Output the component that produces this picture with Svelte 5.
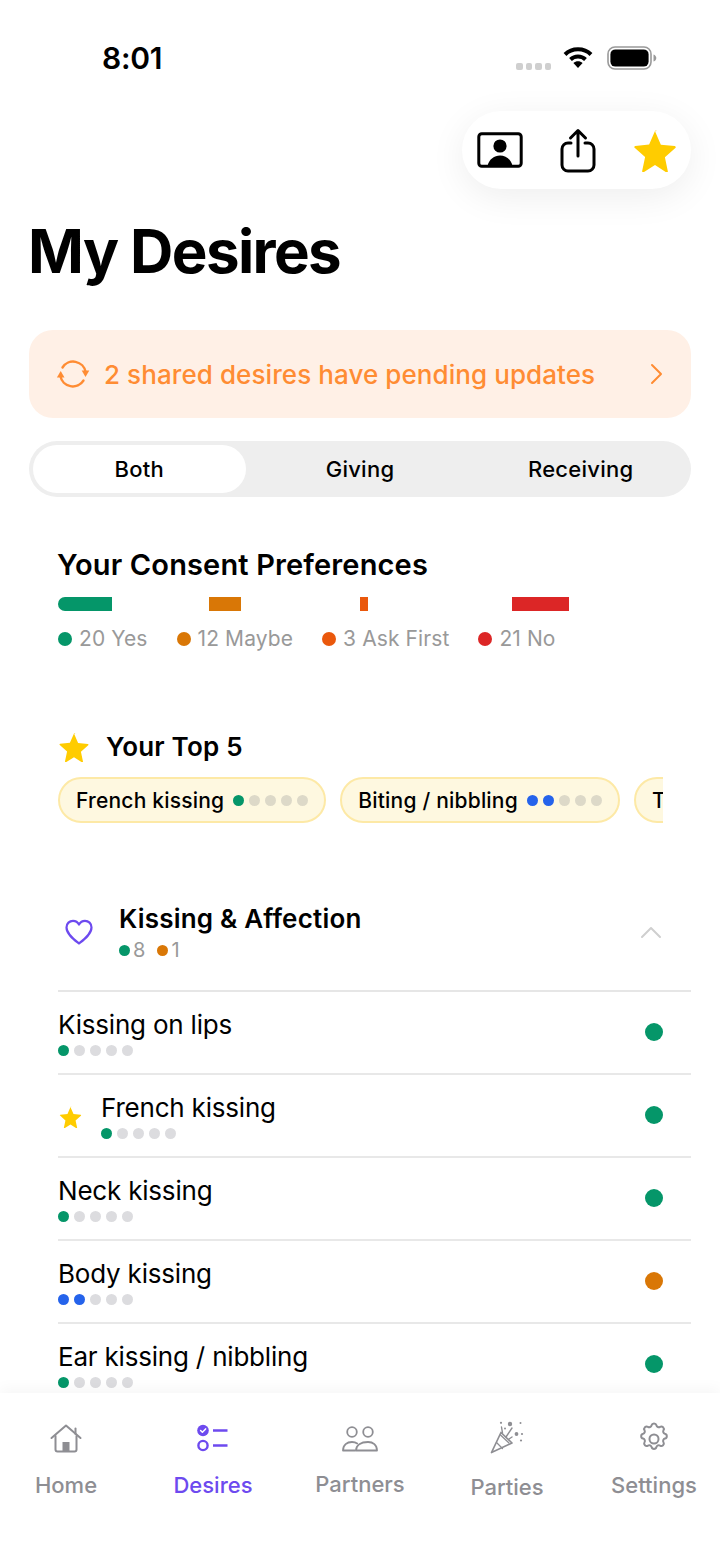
<script lang="ts">
  const consent = [
    { label: '20 Yes', color: '#059669', width: 54 },
    { label: '12 Maybe', color: '#d97706', width: 32 },
    { label: '3 Ask First', color: '#ea580c', width: 8 },
    { label: '21 No', color: '#dc2626', width: 57 }
  ];

  const GREEN = '#059669';
  const BLUE = '#2563eb';

  const top5 = [
    { name: 'French kissing', color: GREEN, level: 1 },
    { name: 'Biting / nibbling', color: BLUE, level: 2 },
    { name: 'Teasing', color: GREEN, level: 1 }
  ];

  const rows = [
    { name: 'Kissing on lips', level: 1, color: GREEN, status: GREEN },
    { name: 'French kissing', level: 1, color: GREEN, status: GREEN, starred: true },
    { name: 'Neck kissing', level: 1, color: GREEN, status: GREEN },
    { name: 'Body kissing', level: 2, color: BLUE, status: '#d97706' },
    { name: 'Ear kissing / nibbling', level: 1, color: GREEN, status: GREEN }
  ];

  const starPath = 'M12 1.2l3.2 7.3 7.6.8c.5.1.7.7.3 1l-5.7 5.1 1.6 7.6c.1.5-.4.9-.9.6L12 19.6l-6.100 3.9c-.5.3-1-.1-.9-.6l1.600-7.600-5.700-5.100c-.4-.3-.2-.9.3-1l7.600-.8 3.200-7.300c.2-.4.800-.4 1 0z';
</script>

<div class="screen">
  <main class="content">
    <header class="status">
      <span class="time">8:01</span>
      <div class="status-right">
        <div class="signal"><i></i><i></i><i></i><i></i></div>
        <svg class="wifi" width="30" height="22" viewBox="0 0 30 22" fill="none" stroke="#000" stroke-width="4">
          <path d="M2 8.500C9 1.500 21 1.500 28 8.500" />
          <path d="M7.500 13.500c4.200-4 10.800-4 15 0" />
          <path d="M15 22l-4.600-5c2.600-2.200 6.600-2.200 9.200 0z" fill="#000" stroke="none" />
        </svg>
        <svg class="battery" width="50" height="24" viewBox="0 0 50 24" fill="none">
          <rect x="1" y="1" width="43" height="22" rx="7" stroke="#999" stroke-width="1.600" />
          <rect x="3.400" y="3.400" width="38.200" height="17.200" rx="5" fill="#000" />
          <path d="M46.500 8.500c1.800.5 2.800 2 2.800 3.500s-1 3-2.800 3.500z" fill="#999" />
        </svg>
      </div>
    </header>

    <div class="toolbar-row">
      <div class="toolbar">
        <svg width="46" height="36" viewBox="0 0 46 36" fill="none">
          <rect x="1.800" y="1.800" width="42.400" height="32.400" rx="3" stroke="#000" stroke-width="3" />
          <circle cx="23" cy="14" r="6.600" fill="#000" />
          <path d="M10.500 34c1.500-7 7-10.500 12.500-10.500S34 27 35.500 34z" fill="#000" />
        </svg>
        <svg width="36" height="45" viewBox="0 0 36 45" fill="none" stroke="#000" stroke-width="3" stroke-linecap="round" stroke-linejoin="round">
          <path d="M11 15H8a6 6 0 0 0-6 6v16a6 6 0 0 0 6 6h20a6 6 0 0 0 6-6V21a6 6 0 0 0-6-6h-3" />
          <path d="M18 28V3M10.500 10L18 2.500 25.500 10" />
        </svg>
        <svg width="44" height="43" viewBox="0 0 24 23.400" fill="#ffcc00"><path d={starPath} /></svg>
      </div>
    </div>

    <h1>My Desires</h1>

    <div class="banner">
      <svg width="34" height="30" viewBox="0 0 34 30" fill="none" stroke="#ff8c33" stroke-width="2.400" stroke-linecap="round">
        <path d="M6.500 8.500A12.600 12.600 0 0 1 29.600 13" />
        <path d="M27.500 21.500A12.600 12.600 0 0 1 4.400 17" />
        <path d="M25.700 11.500h7.600L29.500 18z" fill="#ff8c33" stroke="none" />
        <path d="M.9 18.500h7.600L4.700 12z" fill="#ff8c33" stroke="none" />
      </svg>
      <span class="banner-text">2 shared desires have pending updates</span>
      <svg class="banner-chevron" width="14" height="22" viewBox="0 0 14 22" fill="none" stroke="#ff8c33" stroke-width="2" stroke-linecap="round" stroke-linejoin="round">
        <path d="M3 2l9 9-9 9" />
      </svg>
    </div>

    <div class="segments">
      <div class="segment active">Both</div>
      <div class="segment">Giving</div>
      <div class="segment">Receiving</div>
    </div>

    <section class="consent">
      <h2>Your Consent Preferences</h2>
      <div class="bars">
        {#each consent as item, i}
          <div class="bar-cell">
            <div class="bar" class:first={i === 0} style="width:{item.width}px;background:{item.color}"></div>
          </div>
        {/each}
      </div>
      <div class="legend">
        {#each consent as item}
          <span class="legend-item"><i style="background:{item.color}"></i>{item.label}</span>
        {/each}
      </div>
    </section>

    <section class="top5">
      <div class="top5-head">
        <svg width="32" height="30" viewBox="0 0 24 23.400" fill="#ffcc00"><path d={starPath} /></svg>
        <h3>Your Top 5</h3>
      </div>
      <div class="chips">
        {#each top5 as chip}
          <div class="chip">
            <span>{chip.name}</span>
            <div class="dots chip-dots">
              {#each [1, 2, 3, 4, 5] as n}
                <i style={n <= chip.level ? `background:${chip.color}` : ''}></i>
              {/each}
            </div>
          </div>
        {/each}
      </div>
    </section>

    <section class="category">
      <div class="cat-head">
        <svg class="heart" width="28" height="26" viewBox="0 0 28 26" fill="none" stroke="#6d4aef" stroke-width="2.200" stroke-linejoin="round">
          <path d="M14 24.500C9 20.500 1.500 15 1.500 8.500 1.500 4.500 4.500 1.800 8 1.800c2.600 0 4.800 1.400 6 3.700 1.200-2.300 3.400-3.700 6-3.700 3.500 0 6.500 2.700 6.500 6.700 0 6.500-7.500 12-12.500 16z" />
        </svg>
        <div class="cat-title">
          <h3>Kissing &amp; Affection</h3>
          <div class="cat-counts">
            <span><i style="background:#059669"></i>8</span>
            <span><i style="background:#d97706"></i>1</span>
          </div>
        </div>
        <svg class="cat-chevron" width="22" height="14" viewBox="0 0 22 14" fill="none" stroke="#cfcfcf" stroke-width="2" stroke-linecap="round" stroke-linejoin="round">
          <path d="M2 12l9-9 9 9" />
        </svg>
      </div>

      {#each rows as row}
        <div class="row">
          {#if row.starred}
            <svg class="row-star" width="23" height="22" viewBox="0 0 24 23.400" fill="#ffcc00"><path d={starPath} /></svg>
          {/if}
          <div class="row-main">
            <div class="row-name">{row.name}</div>
            <div class="dots">
              {#each [1, 2, 3, 4, 5] as n}
                <i style={n <= row.level ? `background:${row.color}` : ''}></i>
              {/each}
            </div>
          </div>
          <div class="status-dot" style="background:{row.status}"></div>
        </div>
      {/each}
    </section>
  </main>

  <nav class="tabs">
    <div class="tab">
      <svg width="32" height="29" viewBox="0 0 32 29" fill="none" stroke="#8e8e93" stroke-width="2" stroke-linecap="round" stroke-linejoin="round">
        <path d="M1.500 14L16 1.500 30.500 14" />
        <path d="M25.500 4.500V10" />
        <path d="M5.500 12v13.500a2 2 0 0 0 2 2h17a2 2 0 0 0 2-2V12" />
        <rect x="12.500" y="18" width="7" height="9.500" fill="#8e8e93" stroke="none" />
      </svg>
      <span>Home</span>
    </div>
    <div class="tab active">
      <svg width="32" height="28" viewBox="0 0 32 28" fill="none" stroke="#6d4aef" stroke-width="2.400" stroke-linecap="round">
        <circle cx="6" cy="6.500" r="5.800" fill="#6d4aef" stroke="none" />
        <path d="M3.600 6.500l1.800 1.800 3.200-3.400" stroke="#fff" stroke-width="1.500" stroke-linejoin="round" />
        <circle cx="6" cy="21.500" r="4.600" />
        <path d="M16 6.500h14.500M16 21.500h14.500" stroke-linecap="butt" />
      </svg>
      <span>Desires</span>
    </div>
    <div class="tab partners">
      <svg width="36" height="26" viewBox="0 0 36 26" fill="none" stroke="#8e8e93" stroke-width="1.800" stroke-linecap="round" stroke-linejoin="round">
        <circle cx="10" cy="6" r="4.800" />
        <path d="M1 24.500c0-5.500 4-8.500 9-8.500 2 0 3.800.5 5.200 1.500M1 24.500h12" />
        <circle cx="26" cy="6" r="4.800" />
        <path d="M14 24.500c0-5.500 5-8.500 12-8.500 5 0 9 3 9 8.500z" />
      </svg>
      <span>Partners</span>
    </div>
    <div class="tab parties">
      <svg width="34" height="34" viewBox="0 0 34 34" fill="none" stroke="#8e8e93" stroke-width="1.700" stroke-linecap="round" stroke-linejoin="round">
        <path d="M1.500 31.500L11 11.500l11 10.500z" />
        <path d="M6.500 21.500l6 6M10.500 14l8.500 8" stroke-width="1.300" />
        <path d="M12.500 12l-1-6M16 16l6-9M19 18l3-2" stroke-width="1.400" />
        <circle cx="20" cy="3" r="2.200" fill="#8e8e93" stroke="none" />
        <circle cx="26.500" cy="13" r="1.900" fill="#8e8e93" stroke="none" />
        <circle cx="32" cy="13" r="1.100" fill="#8e8e93" stroke="none" />
        <circle cx="31" cy="19.500" r="1.100" fill="#8e8e93" stroke="none" />
        <circle cx="11" cy="1.800" r="1.100" fill="#8e8e93" stroke="none" />
        <circle cx="30.500" cy="2" r="1" fill="#8e8e93" stroke="none" />
        <circle cx="15" cy="7.500" r="1" fill="#8e8e93" stroke="none" />
      </svg>
      <span>Parties</span>
    </div>
    <div class="tab settings">
      <svg width="34" height="34" viewBox="0 0 24 24" fill="none" stroke="#8e8e93" stroke-width="1.400" stroke-linecap="round" stroke-linejoin="round">
        <circle cx="12" cy="12" r="3.200" />
        <path d="M10.300 2.300c.4-1.700 3-1.700 3.400 0a1.700 1.700 0 0 0 2.600 1.100c1.500-.9 3.300.9 2.400 2.400a1.700 1.700 0 0 0 1 2.500c1.800.4 1.800 3 0 3.400a1.700 1.700 0 0 0-1 2.600c.9 1.500-.9 3.300-2.400 2.400a1.700 1.700 0 0 0-2.600 1c-.4 1.800-3 1.800-3.400 0a1.700 1.700 0 0 0-2.600-1c-1.500.9-3.300-.9-2.400-2.400a1.700 1.700 0 0 0-1-2.600c-1.800-.4-1.800-3 0-3.400a1.700 1.700 0 0 0 1-2.500c-.9-1.500.9-3.300 2.400-2.400a1.700 1.700 0 0 0 2.600-1.100z" />
      </svg>
      <span>Settings</span>
    </div>
  </nav>
</div>

<style>
  :global(body) {
    margin: 0;
    background: #fff;
  }

  .screen {
    width: 720px;
    height: 1565px;
    display: flex;
    flex-direction: column;
    overflow: hidden;
    font-family: Inter, 'Liberation Sans', sans-serif;
    color: #000;
    background: #fff;
  }

  .content {
    height: 1393px;
    overflow: hidden;
    flex: none;
    padding: 0 29px;
    box-sizing: border-box;
    background: #fff;
  }

  .status {
    height: 111px;
    display: flex;
    justify-content: space-between;
    align-items: flex-start;
    padding: 41px 34px 0 73px;
    box-sizing: border-box;
  }

  .time {
    font-size: 30px;
    line-height: 34px;
    font-weight: 600;
    letter-spacing: -0.3px;
  }

  .status-right {
    display: flex;
    align-items: flex-start;
    padding-top: 5px;
  }

  .signal {
    display: flex;
    gap: 3px;
    margin-top: 17px;
    margin-right: 12px;
  }

  .signal i {
    width: 6.500px;
    height: 6.500px;
    border-radius: 2px;
    background: #cfcfcf;
  }

  .battery {
    margin-left: 14px;
  }

  .toolbar-row {
    display: flex;
    justify-content: flex-end;
  }

  .toolbar {
    width: 229px;
    height: 78px;
    box-sizing: border-box;
    display: flex;
    align-items: center;
    justify-content: space-between;
    padding: 0 14px 0 15px;
    border-radius: 39px;
    background: #fff;
    box-shadow: 0 8px 36px rgba(0, 0, 0, 0.07);
  }

  h1 {
    margin: 28px 0 0 -1px;
    font-size: 60px;
    line-height: 68px;
    font-weight: 700;
    letter-spacing: -1.600px;
  }

  .banner {
    margin-top: 45px;
    height: 88px;
    border-radius: 24px;
    background: #fff0e6;
    display: flex;
    align-items: center;
    padding: 0 28px 0 27px;
    gap: 14px;
  }

  .banner-text {
    flex: 1;
    font-size: 26px;
    font-weight: 500;
    color: #ff8c33;
    letter-spacing: 0.080px;
  }

  .segments {
    margin-top: 23px;
    height: 56px;
    border-radius: 28px;
    background: #eeeeee;
    display: grid;
    grid-template-columns: repeat(3, 1fr);
  }

  .segment {
    display: flex;
    align-items: center;
    justify-content: center;
    font-size: 22px;
    font-weight: 500;
    letter-spacing: 0.250px;
  }

  .segment.active {
    margin: 4px;
    background: #fff;
    border-radius: 24px;
  }

  .consent {
    margin-top: 50px;
    padding-left: 29px;
  }

  h2 {
    margin: 0 0 0 -1px;
    font-size: 29px;
    line-height: 36px;
    font-weight: 600;
    letter-spacing: 0.150px;
  }

  .bars {
    margin-top: 14px;
    display: grid;
    grid-template-columns: repeat(4, 151.200px);
  }

  .bar {
    height: 14px;
  }

  .bar.first {
    border-radius: 7px 0 0 7px;
  }

  .legend {
    margin-top: 15px;
    display: flex;
    gap: 29px;
    font-size: 21px;
    line-height: 26px;
    letter-spacing: 0.100px;
    color: #999999;
  }

  .legend-item {
    display: flex;
    align-items: center;
    gap: 7px;
  }

  .legend-item i {
    width: 14px;
    height: 14px;
    border-radius: 50%;
  }

  .top5 {
    margin-top: 79px;
    padding-left: 29px;
  }

  .top5-head {
    display: flex;
    align-items: center;
    gap: 16px;
    height: 32px;
  }

  h3 {
    margin: 0;
    font-size: 26px;
    line-height: 32px;
    font-weight: 600;
    letter-spacing: 0.200px;
  }

  .chips {
    margin-top: 14px;
    width: 605px;
    display: flex;
    gap: 14px;
    overflow: hidden;
  }

  .chip {
    flex: none;
    height: 46px;
    box-sizing: border-box;
    display: flex;
    align-items: center;
    gap: 9px;
    padding: 0 16px;
    border-radius: 23px;
    background: #fef8e0;
    border: 2px solid #fde9a6;
    font-size: 21px;
    font-weight: 500;
    letter-spacing: 0.200px;
  }

  .dots {
    display: flex;
    gap: 5px;
  }

  .dots i {
    width: 11px;
    height: 11px;
    border-radius: 50%;
    background: #dcdcdf;
  }

  .chip-dots i {
    background: #ddd9c8;
  }

  .category {
    margin-top: 70px;
    padding-left: 29px;
  }

  .cat-head {
    height: 99px;
    display: flex;
    align-items: flex-start;
    border-bottom: 2px solid #e6e6e6;
    box-sizing: border-box;
    padding-top: 10px;
  }

  .heart {
    margin: 16px 0 0 7px;
  }

  .cat-title {
    margin-left: 26px;
    flex: 1;
  }

  .cat-counts {
    display: flex;
    gap: 12px;
    font-size: 20px;
    line-height: 24px;
    color: #999;
    margin-top: 3px;
  }

  .cat-counts span {
    display: flex;
    align-items: center;
    gap: 3px;
  }

  .cat-counts i {
    width: 11px;
    height: 11px;
    border-radius: 50%;
  }

  .cat-chevron {
    margin: 22px 29px 0 0;
  }

  .row {
    height: 83px;
    box-sizing: border-box;
    border-bottom: 2px solid #e8e8e8;
    display: flex;
    align-items: flex-start;
  }

  .row-star {
    margin: 31px 19px 0 1px;
  }

  .row-main {
    flex: 1;
    padding-top: 17px;
  }

  .row-name {
    font-size: 26px;
    line-height: 32px;
    letter-spacing: -0.200px;
    margin-bottom: 4px;
  }

  .status-dot {
    width: 18px;
    height: 18px;
    border-radius: 50%;
    margin: 31px 28px 0 0;
  }

  .tabs {
    position: relative;
    flex: none;
    height: 172px;
    display: flex;
    gap: 15px;
    background: #fff;
    box-shadow: 0 -4px 14px rgba(0, 0, 0, 0.04);
  }

  .tab {
    width: 132px;
    display: flex;
    flex-direction: column;
    align-items: center;
    padding-top: 31px;
    color: #8e8e93;
    font-size: 22px;
    line-height: 26px;
    font-weight: 500;
  }

  .tab span {
    margin-top: 19px;
  }

  .tab.active {
    color: #6d4aef;
  }

  .tab.active span {
    margin-top: 20px;
  }

  .tab.partners {
    padding-top: 33px;
  }

  .tab.partners span {
    margin-top: 19px;
  }

  .tab.parties {
    padding-top: 28px;
  }

  .tab.settings {
    padding-top: 29px;
  }

  .tab.settings span {
    margin-top: 16px;
  }
</style>
